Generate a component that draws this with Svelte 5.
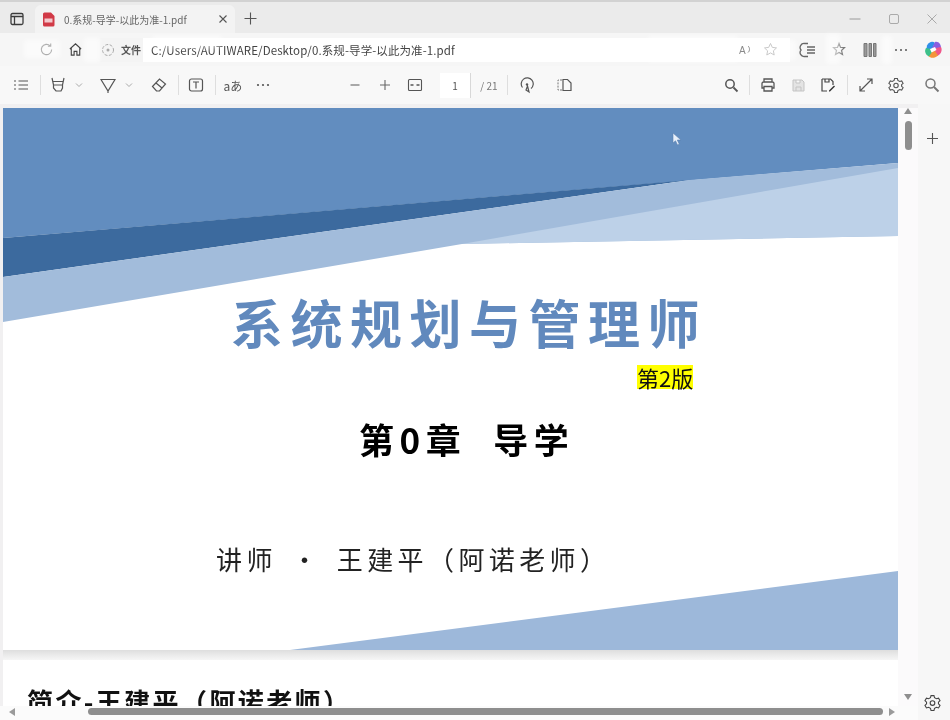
<script>
  // white smears left over in the video frame, on top of the address bar
  const smears = [
    { x: 24, y: 40, w: 36, h: 18 },
    { x: 84, y: 38, w: 16, h: 24 },
    { x: 152, y: 36, w: 70, h: 12 },
    { x: 648, y: 36, w: 90, h: 26 },
    { x: 752, y: 40, w: 44, h: 20 },
    { x: 826, y: 34, w: 14, h: 30 },
    { x: 882, y: 36, w: 10, h: 28 },
  ];
</script>

<div class="win">
  <div class="tabs">
    <span class="tabs-btn">
      <svg width="14" height="14" viewBox="0 0 14 14"><rect x="1" y="1.5" width="12" height="11" rx="1.5" fill="none" stroke="#3c3c3c" stroke-width="1.3"/><path d="M1 4.5h12M4.5 4.5v8" stroke="#3c3c3c" stroke-width="1.3"/></svg>
    </span>
    <div class="tab">
      <svg width="13" height="15" viewBox="0 0 13 15"><path d="M1 2a1.5 1.5 0 0 1 1.5-1.5H9L12.5 4v9A1.5 1.5 0 0 1 11 14.500H2.500A1.500 1.500 0 0 1 1 13z" fill="#d13a47"/><rect x="2.500" y="6.500" width="8" height="4" fill="#f4c9cd"/></svg>
      <span class="tab-title">0.系规-导学-以此为准-1.pdf</span>
      <svg class="tab-x" width="10" height="10" viewBox="0 0 10 10"><path d="M1.500 1.500l7 7M8.500 1.500l-7 7" stroke="#555" stroke-width="1.100"/></svg>
    </div>
    <svg class="tab-new" width="13" height="13" viewBox="0 0 13 13"><path d="M6.500 0.500v12M0.500 6.500h12" stroke="#555" stroke-width="1.100"/></svg>
    <div class="win-btns">
      <svg width="12" height="12" viewBox="0 0 12 12"><path d="M0.500 6h11" stroke="#9a9a9a"/></svg>
      <svg width="12" height="12" viewBox="0 0 12 12"><rect x="1.500" y="1.500" width="9" height="9" rx="1.500" fill="none" stroke="#aaa"/></svg>
      <svg width="12" height="12" viewBox="0 0 12 12"><path d="M1.500 1.500l9 9M10.500 1.500l-9 9" stroke="#aaa"/></svg>
    </div>
  </div>

  <div class="addr">
    <div class="nav">
      <svg width="15" height="15" viewBox="0 0 16 16"><path d="M13.500 8a5.500 5.500 0 1 1-1.600-3.900M12.500 1.500v3h-3" fill="none" stroke="#555" stroke-width="1.200"/></svg>
      <svg width="15" height="15" viewBox="0 0 16 16"><path d="M2 7.500 8 2l6 5.500M3.500 6.500V14h3v-4h3v4h3V6.500" fill="none" stroke="#444" stroke-width="1.200"/></svg>
    </div>
    <div class="url">
      <span class="chip">
        <svg width="14" height="14" viewBox="0 0 14 14"><circle cx="7" cy="7" r="5.500" fill="none" stroke="#aaa" stroke-dasharray="3 1.500"/><circle cx="7" cy="7" r="1.500" fill="#aaa"/></svg>
        <span class="scheme">文件</span>
      </span>
      <span class="path">C:/Users/AUTIWARE/Desktop/0.系规-导学-以此为准-1.pdf</span>
      <span class="url-end">
        <svg width="15" height="15" viewBox="0 0 15 15"><text x="1" y="12" class="aa">A</text><path d="M10 4c2 1.500 2 5 0 6.500" fill="none" stroke="#888"/></svg>
        <svg width="15" height="15" viewBox="0 0 15 15"><path d="M7.500 1.500l1.800 3.900 4.200.5-3.100 2.900.8 4.200-3.700-2.100-3.700 2.100.8-4.200L1.500 5.900l4.200-.5z" fill="none" stroke="#888"/></svg>
      </span>
    </div>
    <div class="addr-tools">
      <svg width="18" height="18" viewBox="0 0 18 18"><path d="M9 2.500H5.500A4 4 0 0 0 2 9a4 4 0 0 0 3.500 6.500H9M8 6h8M8 9h8M8 12h8" fill="none" stroke="#666" stroke-width="1.300"/></svg>
      <svg width="18" height="18" viewBox="0 0 18 18"><path d="M9 2.500l1.500 4h4l-3 3 1 4-3.500-2-3.500 2 1-4-3-3h4z" fill="none" stroke="#777" stroke-width="1.200"/></svg>
      <svg width="18" height="18" viewBox="0 0 18 18"><path d="M3 2.500h3v13H3zM8 2.500h2.500v13H8zM12.500 2.500H15v13h-2.500z" fill="#999" stroke="#777"/></svg>
      <svg width="18" height="18" viewBox="0 0 18 18"><circle cx="4" cy="9" r="1" fill="#555"/><circle cx="9" cy="9" r="1" fill="#555"/><circle cx="14" cy="9" r="1" fill="#555"/></svg>
      <svg width="20" height="20" viewBox="0 0 20 20">
        <path d="M4 5.500C6 1.500 10 1 12 3L9 9 3 11z" fill="#2f8fe8"/>
        <path d="M12 2c4-1 6 3 6 6l-6 2-3-2z" fill="#8a5ee0"/>
        <path d="M18 7c2 4-1 8-4 9l-3-5 2-3z" fill="#f0568a"/>
        <path d="M15 15.500c-3 3-8 3-9.500 .5L9 10.500l3 .5z" fill="#f4943a"/>
        <path d="M6 16.500C2.500 15 1 11 3 8l5 1 1 3z" fill="#3cc08a"/>
        <path d="M7 9l5-2 1.500 3-5 2.500z" fill="#fff"/>
      </svg>
    </div>
  </div>

  <div class="tool">
    <span class="slot first"><svg width="16" height="16" viewBox="0 0 16 16"><path d="M5.500 4H15M5.500 8H15M5.500 12H15M1 4h2M1 8h2M1 12h2" stroke="#555" stroke-width="1.200"/></svg></span>
    <i class="sep"></i>
    <span class="slot"><svg width="16" height="18" viewBox="0 0 16 18"><path d="M2 2l1.500 7h9L14 2M3.500 9v3L6 15h5l1.500-3V9M2.500 5.500h11" fill="none" stroke="#555" stroke-width="1.200"/></svg></span>
    <span class="chev"><svg width="8" height="6" viewBox="0 0 8 6"><path d="M1 1.500l3 3 3-3" fill="none" stroke="#aaa"/></svg></span>
    <span class="slot after-chev"><svg width="16" height="17" viewBox="0 0 16 17"><path d="M1 2.500h14L8 14zM8 14v2" fill="none" stroke="#555" stroke-width="1.200"/></svg></span>
    <span class="chev"><svg width="8" height="6" viewBox="0 0 8 6"><path d="M1 1.500l3 3 3-3" fill="none" stroke="#aaa"/></svg></span>
    <span class="slot eraser"><svg width="16" height="16" viewBox="0 0 16 16"><path d="M1.500 9.500l7-7.500 6 5-6 7H5.500zM5 6l6 5" fill="none" stroke="#555" stroke-width="1.200"/></svg></span>
    <i class="sep"></i>
    <span class="slot"><svg width="16" height="16" viewBox="0 0 16 16"><rect x="1.500" y="2" width="13" height="12" rx="2" fill="none" stroke="#555" stroke-width="1.200"/><path d="M5 5h6M8 5v6.500" stroke="#555" stroke-width="1.200"/></svg></span>
    <i class="sep"></i>
    <span class="slot label">aあ</span>
    <span class="slot dots"><svg width="14" height="4" viewBox="0 0 14 4"><circle cx="2" cy="2" r="1.100" fill="#555"/><circle cx="7" cy="2" r="1.100" fill="#555"/><circle cx="12" cy="2" r="1.100" fill="#555"/></svg></span>

    <span class="slot zoom-out"><svg width="12" height="12" viewBox="0 0 12 12"><path d="M1.500 6h9" stroke="#666" stroke-width="1.100"/></svg></span>
    <span class="slot"><svg width="12" height="12" viewBox="0 0 12 12"><path d="M1 6h10M6 1v10" stroke="#666" stroke-width="1.100"/></svg></span>
    <span class="slot"><svg width="16" height="14" viewBox="0 0 16 14"><rect x="1.500" y="1.500" width="13" height="11" rx="1" fill="none" stroke="#555" stroke-width="1.100"/><path d="M3.500 7h3M9.500 7h3" stroke="#555" stroke-width="1.500"/></svg></span>
    <span class="page-num">1</span>
    <span class="page-total">/ 21</span>
    <i class="sep gap-sep"></i>
    <span class="slot"><svg width="16" height="17" viewBox="0 0 16 17"><path d="M3.500 10.500A6 6 0 1 1 12 11.500M8.500 9l1.500 6-3-2z" fill="none" stroke="#555" stroke-width="1.200"/><circle cx="8" cy="7.500" r="1.200" fill="#555"/></svg></span>
    <span class="slot pages"><svg width="16" height="14" viewBox="0 0 16 14"><path d="M6 2H2v10h4" fill="none" stroke="#777" stroke-dasharray="2 1.200"/><path d="M7 1.500h4.500L15 5v7.500H7z" fill="none" stroke="#555" stroke-width="1.200"/></svg></span>

    <span class="slot search"><svg width="15" height="15" viewBox="0 0 15 15"><circle cx="6" cy="6" r="4.200" fill="none" stroke="#555" stroke-width="1.500"/><path d="M9.500 9.500l4 4" stroke="#555" stroke-width="1.800"/></svg></span>
    <i class="sep tight"></i>
    <span class="slot"><svg width="16" height="16" viewBox="0 0 16 16"><path d="M4 5V2h8v3M4 11H2V6.500A1.500 1.500 0 0 1 3.500 5h9A1.500 1.500 0 0 1 14 6.500V11h-2M4 9.500h8V14H4z" fill="none" stroke="#555" stroke-width="1.300"/></svg></span>
    <span class="slot"><svg width="15" height="15" viewBox="0 0 15 15"><path d="M2 2h9l2 2v9H2zM5 2v3h4V2M5 13V9h5v4" fill="#e4e4e4" stroke="#c4c4c4"/></svg></span>
    <span class="slot"><svg width="16" height="16" viewBox="0 0 16 16"><path d="M2 2h8.500L13 4.500V8M7 14H2V2M5 2v3h4V2" fill="none" stroke="#444" stroke-width="1.200"/><path d="M9 13.500l5-5 1 1-5 5H9z" fill="#333"/></svg></span>
    <i class="sep tight wider"></i>
    <span class="slot"><svg width="16" height="16" viewBox="0 0 16 16"><path d="M2 14L14 2M9 2h5v5M2 9v5h5" fill="none" stroke="#555" stroke-width="1.200"/></svg></span>
    <span class="slot"><svg width="16" height="16" viewBox="0 0 16 16"><path d="M6.600 1.500h2.800l.5 2 1.800 1 2-.6 1.400 2.400-1.500 1.400v1.600l1.500 1.400-1.400 2.400-2-.6-1.800 1-.5 2H6.600l-.5-2-1.800-1-2 .6-1.400-2.400 1.500-1.400V7.700L.9 6.300l1.400-2.400 2 .6 1.800-1z" fill="none" stroke="#555" stroke-width="1.100"/><circle cx="8" cy="8.500" r="2.200" fill="none" stroke="#555" stroke-width="1.100"/></svg></span>
    <span class="slot side-search"><svg width="16" height="16" viewBox="0 0 16 16"><circle cx="6.500" cy="6.500" r="4.500" fill="none" stroke="#777" stroke-width="1.500"/><path d="M10 10l4.500 4.500" stroke="#777" stroke-width="2"/></svg></span>
  </div>

  <div class="body">
    <div class="viewer">
      <div class="view-row">
        <div class="pages-wrap">
          <section class="page">
            <svg class="slide-bg" viewBox="0 0 895 542" preserveAspectRatio="none">
              <polygon points="0,0 895,0 895,55 0,130" fill="#628dbf"/>
              <polygon points="0,130 687,72 0,169" fill="#3c6a9e"/>
              <polygon points="0,169 687,72 895,55 895,128 459,136 0,214" fill="#a2bcdb"/>
              <polygon points="459,136 895,60 895,128" fill="#bdd1e8"/>
              <polygon points="287,542 895,463 895,542" fill="#9db8da"/>
            </svg>
            <div class="slide-text">
              <h1>系统规划与管理师</h1>
              <div class="edition"><mark>第2版</mark></div>
              <h2>第0章<span class="wide"></span>导学</h2>
              <p>讲师<span class="dot">·</span>王建平（阿诺老师）</p>
            </div>
          </section>
          <div class="page-gap"></div>
          <section class="page second">
            <h3>简介-王建平（阿诺老师）</h3>
          </section>
        </div>
        <div class="vscroll">
          <i class="arrow up"></i>
          <i class="vthumb"></i>
          <i class="arrow down"></i>
        </div>
      </div>
      <div class="hscroll">
        <i class="arrow left"></i>
        <i class="hthumb"></i>
        <i class="arrow right"></i>
      </div>
    </div>
    <aside class="side">
      <svg width="11" height="11" viewBox="0 0 11 11"><path d="M5.500 0v11M0 5.500h11" stroke="#555" stroke-width="1.100"/></svg>
      <svg width="17" height="17" viewBox="0 0 16 16"><path d="M6.600 1.500h2.800l.5 2 1.800 1 2-.6 1.400 2.400-1.500 1.400v1.600l1.500 1.400-1.400 2.400-2-.6-1.800 1-.5 2H6.600l-.5-2-1.800-1-2 .6-1.400-2.400 1.500-1.400V7.700L.9 6.300l1.400-2.400 2 .6 1.800-1z" fill="none" stroke="#444" stroke-width="1"/><circle cx="8" cy="8.500" r="2.200" fill="none" stroke="#444" stroke-width="1"/></svg>
    </aside>
  </div>

  {#each smears as s}
    <i class="smear" style="left:{s.x}px;top:{s.y}px;width:{s.w}px;height:{s.h}px"></i>
  {/each}

  <svg class="cursor" width="10" height="14" viewBox="0 0 10 14"><path d="M1 1v10l2.500-2.200L5.500 13l1.800-.8-2-4.200H9z" fill="#e8f0fa" stroke="#5b7fae" stroke-width=".6"/></svg>
</div>

<style>
  :global(body) {
    margin: 0;
    background: #f6f6f6;
  }

  .win {
    position: relative;
    width: 950px;
    height: 720px;
    overflow: hidden;
    display: flex;
    flex-direction: column;
    font-family: "Noto Sans CJK SC", "Liberation Sans", sans-serif;
    color: #444;
    filter: blur(0.5px);
  }

  svg {
    display: block;
    flex: none;
  }

  /* tab strip */
  .tabs {
    height: 31px;
    border-top: 2px solid #d2d2d2;
    background: #ebebeb;
    display: flex;
    align-items: flex-end;
    flex: none;
  }

  .tabs-btn {
    width: 34px;
    height: 29px;
    display: flex;
    align-items: center;
    justify-content: center;
  }

  .tab {
    width: 200px;
    height: 28px;
    margin-left: 1px;
    background: #f3f3f3;
    border-radius: 6px 6px 0 0;
    display: flex;
    align-items: center;
    padding-left: 7px;
    box-sizing: border-box;
  }

  .tab-title {
    margin-left: 9px;
    font-size: 10px;
    color: #666;
    white-space: nowrap;
  }

  .tab-x {
    margin-left: auto;
    margin-right: 7px;
  }

  .tab-new {
    margin: 0 0 8px 9px;
  }

  .win-btns {
    margin-left: auto;
    height: 29px;
    width: 101px;
    display: flex;
    align-items: center;
    justify-content: space-between;
    padding-right: 12px;
    box-sizing: border-box;
  }

  /* address bar */
  .addr {
    height: 33px;
    background: #f6f6f6;
    display: flex;
    align-items: center;
    flex: none;
  }

  .nav {
    width: 100px;
    display: flex;
    gap: 14px;
    padding-left: 39px;
    box-sizing: border-box;
  }

  .url {
    width: 690px;
    height: 24px;
    background: #fff;
    display: flex;
    align-items: center;
    box-sizing: border-box;
  }

  .chip {
    width: 43px;
    height: 24px;
    padding-left: 1px;
    background: #f4f4f4;
    display: flex;
    align-items: center;
    box-sizing: border-box;
    flex: none;
  }

  .scheme {
    margin-left: 6px;
    font-size: 10px;
    font-weight: 700;
    color: #555;
  }

  .path {
    margin-left: 8px;
    font-size: 11.5px;
    letter-spacing: 0.1px;
    color: #444;
    white-space: nowrap;
  }

  .url-end {
    margin-left: auto;
    margin-right: 12px;
    display: flex;
    gap: 10px;
  }

  .aa {
    font: 10px "Liberation Sans", sans-serif;
    fill: #888;
  }

  .addr-tools {
    flex: 1;
    display: flex;
    align-items: center;
    gap: 13px;
    padding-left: 9px;
  }

  /* pdf toolbar */
  .tool {
    height: 38px;
    background: #f8f8f8;
    display: flex;
    align-items: center;
    flex: none;
  }

  .slot {
    width: 30px;
    height: 30px;
    flex: none;
    display: flex;
    align-items: center;
    justify-content: center;
  }

  .first {
    margin-left: 6px;
  }

  .sep {
    width: 1px;
    height: 20px;
    margin: 0 2px 0 4px;
    background: #dedede;
    flex: none;
  }

  .chev {
    width: 12px;
    display: flex;
    justify-content: center;
    flex: none;
  }

  .after-chev {
    margin-left: 8px;
  }

  .eraser {
    margin-left: 9px;
  }

  .label {
    font-size: 12px;
    color: #555;
  }

  .zoom-out {
    margin-left: 62px;
  }

  .page-num {
    width: 31px;
    height: 25px;
    margin-left: 10px;
    background: #fff;
    border-right: 1px solid #d8d8d8;
    font-size: 10px;
    color: #555;
    display: flex;
    align-items: center;
    justify-content: center;
    box-sizing: border-box;
  }

  .page-total {
    width: 36px;
    text-align: center;
    font-size: 10px;
    color: #777;
    flex: none;
  }

  .gap-sep {
    margin: 0 4px 0 0;
  }

  .pages {
    margin-left: 7px;
  }

  .search {
    margin-left: 137px;
  }

  .tight {
    margin: 0 3px;
  }

  .wider {
    margin: 0 3px 0 4px;
  }

  .side-search {
    margin-left: 6px;
  }

  /* document area */
  .body {
    flex: 1;
    min-height: 0;
    display: flex;
  }

  .viewer {
    width: 918px;
    display: flex;
    flex-direction: column;
  }

  .view-row {
    flex: 1;
    min-height: 0;
    display: flex;
    padding-top: 4px;
    background: #f1f0f1;
  }

  .pages-wrap {
    width: 898px;
    padding-left: 3px;
    box-sizing: border-box;
    overflow: hidden;
  }

  .page {
    position: relative;
    width: 895px;
    height: 542px;
    background: #fff;
    overflow: hidden;
  }

  .page.second {
    height: 60px;
  }

  .page-gap {
    height: 10px;
    background: linear-gradient(#dedede, #f6f6f6);
  }

  .slide-bg {
    position: absolute;
    inset: 0;
    width: 100%;
    height: 100%;
  }

  .slide-text {
    position: relative;
    padding-top: 184px;
    display: flex;
    flex-direction: column;
    font-family: "Noto Sans CJK SC", sans-serif;
  }

  h1 {
    margin: 0 0 0 228px;
    font-size: 52px;
    line-height: 60px;
    letter-spacing: 7.5px;
    font-weight: 700;
    color: #6189bd;
    white-space: nowrap;
  }

  .edition {
    margin: 13px 0 0 634px;
    line-height: 24px;
    height: 24px;
  }

  mark {
    display: inline-block;
    background: #ffff00;
    color: #111;
    font-size: 22px;
    line-height: 24px;
    font-weight: 400;
  }

  h2 {
    margin: 25px 0 0 356px;
    font-size: 35px;
    line-height: 50px;
    letter-spacing: 5.5px;
    font-weight: 700;
    color: #000;
    white-space: nowrap;
  }

  .wide {
    display: inline-block;
    width: 27px;
  }

  p {
    margin: 75px 0 0 213px;
    font-size: 26px;
    line-height: 40px;
    letter-spacing: 4.4px;
    color: #222;
    white-space: nowrap;
  }

  .dot {
    display: inline-block;
    width: 60px;
    text-align: center;
  }

  h3 {
    margin: 21px 0 0 24px;
    font-size: 26px;
    line-height: 40px;
    letter-spacing: 2.4px;
    font-weight: 700;
    color: #111;
    white-space: nowrap;
  }

  /* scrollbars */
  .vscroll {
    width: 20px;
    position: relative;
    background: #fbfafb;
  }

  .vthumb {
    position: absolute;
    left: 7px;
    top: 13px;
    width: 7px;
    height: 29px;
    border-radius: 4px;
    background: #8e8e8e;
  }

  .arrow {
    position: absolute;
    width: 0;
    height: 0;
    border: 4px solid transparent;
  }

  .arrow.up {
    left: 6px;
    top: 0;
    border-bottom: 6px solid #8e8e8e;
    border-top: 0;
  }

  .arrow.down {
    left: 6px;
    bottom: 6px;
    border-top: 6px solid #8e8e8e;
    border-bottom: 0;
  }

  .hscroll {
    position: relative;
    height: 14px;
    background: #fbfbfb;
    flex: none;
  }

  .hthumb {
    position: absolute;
    left: 88px;
    top: 2px;
    width: 795px;
    height: 7px;
    border-radius: 4px;
    background: #8e8e8e;
  }

  .arrow.left {
    left: 9px;
    top: 2px;
    border-right: 6px solid #9a9a9a;
    border-left: 0;
  }

  .arrow.right {
    left: 889px;
    top: 2px;
    border-left: 6px solid #9a9a9a;
    border-right: 0;
  }

  .side {
    flex: 1;
    background: #f7f7f7;
    display: flex;
    flex-direction: column;
    align-items: center;
    justify-content: space-between;
    padding: 29px 4px 9px 0;
  }

  /* overlays */
  .smear {
    position: absolute;
    background: rgba(255, 255, 255, 0.55);
    filter: blur(2px);
  }

  .cursor {
    position: absolute;
    left: 672px;
    top: 132px;
  }
</style>
